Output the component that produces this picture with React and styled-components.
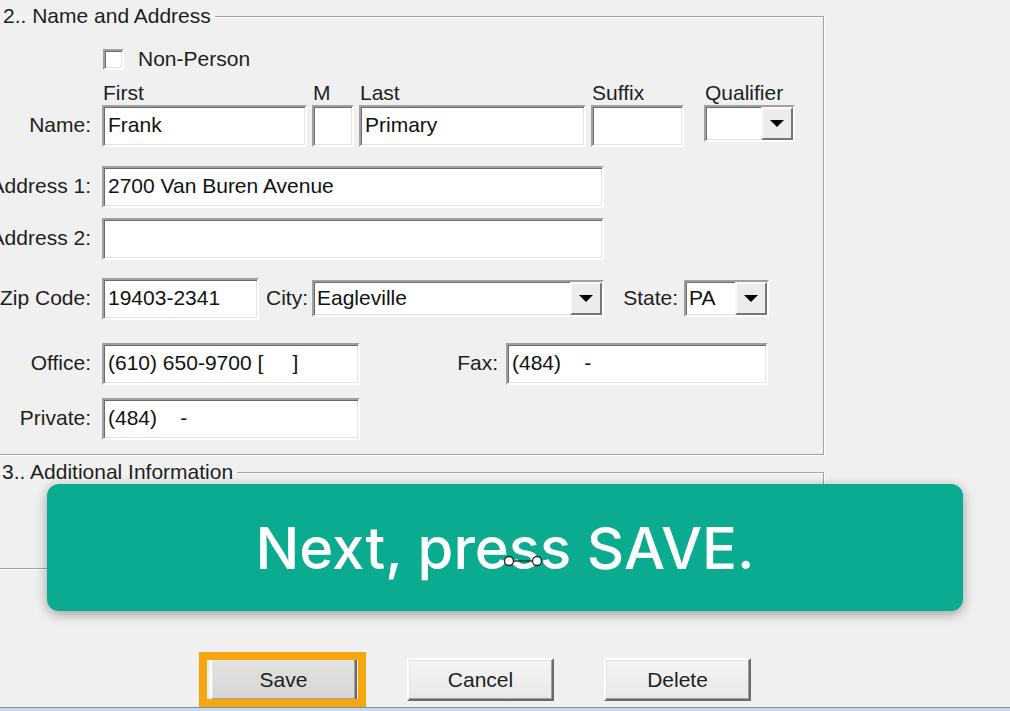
import styled, { createGlobalStyle, css } from "styled-components";

const GlobalStyle = createGlobalStyle`
  body {
    margin: 0;
    background: #f0f0f0;
    overflow: hidden;
  }
`;

const Page = styled.div`
  position: relative;
  width: 1010px;
  height: 711px;
  overflow: hidden;
  display: flex;
  flex-direction: column;
  padding-top: 4px;
  box-sizing: border-box;
  background: #f0f0f0;
  font-family: "Liberation Sans", Arial, sans-serif;
  font-size: 21px;
  color: #1e1e1e;
`;

const GroupBox = styled.fieldset`
  box-sizing: border-box;
  width: 854px;
  margin: ${(p) => p.$mt || 0}px 0 0 -30px;
  padding: 0 0 ${(p) => p.$pb || 0}px 0;
  border: 1px solid #a3a3a3;
  box-shadow: 1px 1px 0 #fff, inset 1px 1px 0 #fff;
  min-width: 0;
`;

const Legend = styled.legend`
  margin-left: 27px;
  padding: 0 4px 0 ${(p) => p.$pl || 5}px;
  line-height: 24px;
  white-space: nowrap;
`;

// classic windows sunken edge
const sunken = css`
  box-sizing: border-box;
  border: 2px solid;
  border-color: #a0a0a0 #fff #fff #a0a0a0;
  box-shadow: inset 1px 1px 0 #6b6b6b, inset -1px -1px 0 #e3e3e3;
  background: #fff;
`;

const Row = styled.div`
  display: flex;
  align-items: flex-start;
  margin-top: ${(p) => p.$mt || 0}px;
`;

const RowLabel = styled.div`
  width: 120px;
  margin: ${(p) => p.$mt || 0}px 11px 0 0;
  text-align: right;
  line-height: 39px;
  white-space: nowrap;
`;

const InlineLabel = styled.div`
  width: ${(p) => p.$w}px;
  margin-right: ${(p) => p.$mr}px;
  text-align: right;
  line-height: 40px;
  white-space: nowrap;
`;

const CheckRow = styled.div`
  display: flex;
  align-items: center;
  height: 24px;
  margin: 19px 0 0 132px;
  gap: 14px;
`;

const CheckBox = styled.span`
  ${sunken};
  width: 21px;
  height: 21px;
`;

const Field = styled.div`
  display: flex;
  flex-direction: column;
  width: ${(p) => p.$w}px;
  margin-left: ${(p) => p.$ml || 0}px;
`;

const Caption = styled.div`
  height: 24px;
  line-height: 24px;
  padding-left: 1px;
  white-space: nowrap;
`;

const TextBox = styled.input`
  ${sunken};
  width: ${(p) => (p.$w ? `${p.$w}px` : "100%")};
  height: 42px;
  margin: 0;
  padding: 0 0 3px 4px;
  font: inherit;
  color: #111;
  outline: none;
`;

const Combo = styled.div`
  ${sunken};
  display: flex;
  width: ${(p) => p.$w}px;
  height: 37px;
  margin-top: ${(p) => p.$mt || 0}px;
`;

const ComboText = styled.div`
  flex: 1;
  padding-left: 3px;
  line-height: 31px;
  color: #111;
`;

const DropButton = styled.div`
  box-sizing: border-box;
  width: 32px;
  display: flex;
  align-items: center;
  justify-content: center;
  background: #ececec;
  border: 2px solid;
  border-color: #fafafa #767676 #767676 #fafafa;
`;

const Banner = styled.div`
  position: absolute;
  left: 47px;
  top: 484px;
  width: 916px;
  height: 127px;
  border-radius: 12px;
  background: #0aab8f;
  box-shadow: 0 3px 12px rgba(0, 0, 0, 0.35);
  display: flex;
  align-items: center;
  justify-content: center;
  color: #fff;
  font-family: Inter, "Liberation Sans", sans-serif;
  font-weight: 500;
  font-size: 58px;
`;

const Cursor = styled.svg`
  position: absolute;
  left: 455px;
  top: 70px;
`;

const ButtonRow = styled.div`
  display: flex;
  gap: 50px;
  padding-left: 210px;
  margin-top: 89px;
`;

const Button = styled.div`
  position: relative;
  box-sizing: border-box;
  width: 147px;
  height: 43px;
  display: flex;
  align-items: center;
  justify-content: center;
  border: 2px solid;
  border-color: #fdfdfd #6b6b6b #6b6b6b #fdfdfd;
  box-shadow: inset -1px -1px 0 #a0a0a0, inset 1px 1px 0 #e3e3e3;
  background: ${(p) => (p.$focused ? "linear-gradient(#e2e2e2, #d6d6d6)" : "linear-gradient(#f4f4f4, #e9e9e9)")};
  color: #1e1e1e;

  ${(p) =>
    p.$focused &&
    css`
      &::after {
        content: "";
        position: absolute;
        left: -13px;
        right: -11px;
        top: -8px;
        bottom: -8px;
        border: 8px solid #f6a60e;
      }
    `}
`;

const BottomEdge = styled.div`
  margin-top: auto;
  height: 3px;
  border-top: 1px solid #7f90a4;
  background: #c9d9ec;
`;

const Arrow = () => (
  <svg width="14" height="8" viewBox="0 0 14 8">
    <polygon points="0,0 14,0 7,7" fill="#000" />
  </svg>
);

const ComboBox = ({ w, mt, value }) => (
  <Combo $w={w} $mt={mt}>
    <ComboText>{value}</ComboText>
    <DropButton>
      <Arrow />
    </DropButton>
  </Combo>
);

const App = () => {
  return (
    <Page>
      <GlobalStyle />
      <GroupBox $pb={14}>
        <Legend>2.. Name and Address</Legend>
        <CheckRow>
          <CheckBox />
          Non-Person
        </CheckRow>
        <Row $mt={10}>
          <RowLabel $mt={24}>Name:</RowLabel>
          <Field $w={205}>
            <Caption>First</Caption>
            <TextBox defaultValue="Frank" readOnly />
          </Field>
          <Field $w={42} $ml={5}>
            <Caption>M</Caption>
            <TextBox readOnly />
          </Field>
          <Field $w={227} $ml={5}>
            <Caption>Last</Caption>
            <TextBox defaultValue="Primary" readOnly />
          </Field>
          <Field $w={93} $ml={5}>
            <Caption>Suffix</Caption>
            <TextBox readOnly />
          </Field>
          <Field $w={91} $ml={20}>
            <Caption>Qualifier</Caption>
            <ComboBox w={91} />
          </Field>
        </Row>
        <Row $mt={19}>
          <RowLabel>Address 1:</RowLabel>
          <TextBox $w={502} defaultValue="2700 Van Buren Avenue" readOnly />
        </Row>
        <Row $mt={10}>
          <RowLabel>Address 2:</RowLabel>
          <TextBox $w={502} readOnly />
        </Row>
        <Row $mt={18}>
          <RowLabel>Zip Code:</RowLabel>
          <TextBox $w={157} defaultValue="19403-2341" readOnly />
          <InlineLabel $w={49} $mr={4}>City:</InlineLabel>
          <ComboBox w={292} mt={2} value="Eagleville" />
          <InlineLabel $w={74} $mr={6}>State:</InlineLabel>
          <ComboBox w={85} mt={2} value="PA" />
        </Row>
        <Row $mt={23}>
          <RowLabel>Office:</RowLabel>
          <TextBox $w={258} defaultValue="(610) 650-9700 [     ]" readOnly />
          <InlineLabel $w={138} $mr={8}>Fax:</InlineLabel>
          <TextBox $w={262} defaultValue="(484)    -" readOnly />
        </Row>
        <Row $mt={13}>
          <RowLabel>Private:</RowLabel>
          <TextBox $w={258} defaultValue="(484)    -" readOnly />
        </Row>
      </GroupBox>

      <GroupBox $mt={5} $pb={84}>
        <Legend $pl={4}>3.. Additional Information</Legend>
      </GroupBox>

      <ButtonRow>
        <Button $focused>Save</Button>
        <Button>Cancel</Button>
        <Button>Delete</Button>
      </ButtonRow>

      <BottomEdge />

      <Banner>
        Next, press SAVE.
        <Cursor width="42" height="14" viewBox="0 0 42 14">
          <line x1="12" y1="7" x2="30" y2="7" stroke="#333" strokeWidth="1.5" />
          <circle cx="7" cy="7" r="4.5" fill="#fff" stroke="#222" strokeWidth="1.3" />
          <circle cx="35" cy="7" r="4.5" fill="#fff" stroke="#222" strokeWidth="1.3" />
        </Cursor>
      </Banner>
    </Page>
  );
};

export default App;
